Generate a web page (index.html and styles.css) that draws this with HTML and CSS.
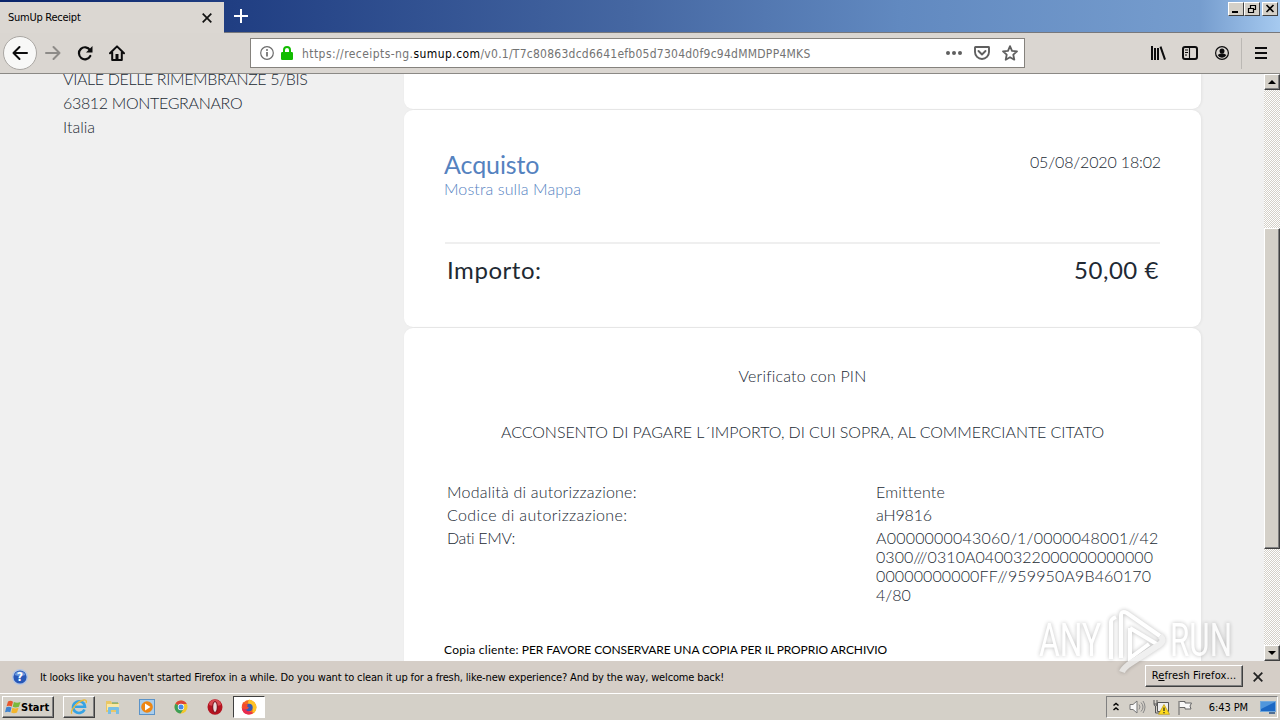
FILE: index.html
```html
<!DOCTYPE html>
<html lang="it">
<head>
  <meta charset="UTF-8">
  <title>SumUp Receipt</title>
  <link rel="stylesheet" href="styles.css">
</head>
<body>
  <div class="screen">

    <!-- Title bar -->
    <div class="titlebar">
      <div class="tab">
        <span class="tab-title">SumUp Receipt</span>
        <svg class="tab-close" width="10" height="10" viewBox="0 0 10 10"><path d="M.7.7l8.6 8.6M9.3.7L.7 9.3" stroke="#111" stroke-width="1.7"/></svg>
      </div>
      <svg class="new-tab" width="14" height="14" viewBox="0 0 14 14"><path d="M7 0v14M0 7h14" stroke="#fff" stroke-width="2"/></svg>
      <div class="window-buttons">
        <span class="win-btn"><svg width="14" height="12"><path d="M3 9h6" stroke="#000" stroke-width="2"/></svg></span>
        <span class="win-btn"><svg width="14" height="12"><path d="M5.500 5V2.500h5v4H8.500M5 2.500h6M3.500 5.500h5v4h-5zM3 5.500h6" fill="none" stroke="#000" stroke-width="1.200"/></svg></span>
        <span class="win-btn win-close"><svg width="14" height="12"><path d="M3.500 2l7 7M10.500 2l-7 7" stroke="#000" stroke-width="1.600"/></svg></span>
      </div>
    </div>

    <!-- Toolbar -->
    <div class="toolbar">
      <div class="nav">
        <span class="back"><svg width="18" height="16" viewBox="0 0 18 16"><path d="M8.500 2L2.500 8l6 6M2.500 8H16" fill="none" stroke="#0c0c0d" stroke-width="2" stroke-linecap="round" stroke-linejoin="round"/></svg></span>
        <svg class="forward" width="18" height="16" viewBox="0 0 18 16"><path d="M9.500 2l6 6-6 6M15.500 8H2" fill="none" stroke="#8d8b88" stroke-width="2" stroke-linecap="round" stroke-linejoin="round"/></svg>
        <svg class="reload" width="16" height="16" viewBox="0 0 16 16"><path d="M13 5A6 6 0 1 0 13.300 11" fill="none" stroke="#0c0c0d" stroke-width="2.200" stroke-linecap="round"/><path d="M15.500 1v6.500H9z" fill="#0c0c0d"/></svg>
        <svg class="home" width="16" height="16" viewBox="0 0 16 16"><path d="M1 8.300L8 1.400l7 6.900M3.200 7.500V15h9.600V7.500" fill="none" stroke="#0c0c0d" stroke-width="2" stroke-linecap="round" stroke-linejoin="round"/><path d="M6.500 9h3v6h-3z" fill="#0c0c0d"/></svg>
      </div>
      <div class="urlbar">
        <svg width="14" height="14" viewBox="0 0 14 14"><circle cx="7" cy="7" r="6.300" fill="none" stroke="#6c6c6c" stroke-width="1.200"/><path d="M7 6v4.500" stroke="#6c6c6c" stroke-width="1.700"/><circle cx="7" cy="3.900" r="1" fill="#6c6c6c"/></svg>
        <svg class="lock" width="12" height="14" viewBox="0 0 12 14"><path d="M3 7V4a3 3 0 0 1 6 0v3" fill="none" stroke="#12bc00" stroke-width="2"/><rect y="6" width="12" height="8" rx="1.200" fill="#12bc00"/></svg>
        <span class="url">https://receipts-ng.<b>sumup.com</b><span class="path">/v0.1/T7c80863dcd6641efb05d7304d0f9c94dMMDPP4MKS</span></span>
        <div class="url-actions">
          <svg width="16" height="4"><g fill="#5f5f5f"><circle cx="2" cy="2" r="2"/><circle cx="8" cy="2" r="2"/><circle cx="14" cy="2" r="2"/></g></svg>
          <svg width="16" height="14" viewBox="0 0 16 14"><path d="M1.500 1h13q.5 0 .5.500V6a7 7 0 0 1-14 0V1.500Q1 1 1.500 1zM4.500 5L8 8.500 11.500 5" fill="none" stroke="#5f5f5f" stroke-width="1.900" stroke-linecap="round" stroke-linejoin="round"/></svg>
          <svg width="16" height="16" viewBox="0 0 16 16"><path d="M8 1.200l2 4.600 5 .5-3.700 3.400 1 5L8 12.200l-4.300 2.500 1-5L1 6.300l5-.5z" fill="none" stroke="#5f5f5f" stroke-width="1.800" stroke-linejoin="round"/></svg>
        </div>
      </div>
      <div class="tools">
        <svg width="16" height="14" viewBox="0 0 16 14"><path d="M2 0v14M5 2v12M8 2v12M10.500.7l4.500 13" stroke="#0c0c0d" stroke-width="2"/></svg>
        <svg width="16" height="14" viewBox="0 0 16 14"><rect x="1" y="1" width="14" height="12" rx="2" fill="none" stroke="#0c0c0d" stroke-width="2"/><path d="M7.500 1v12M3 4h3M3 6.500h3M3 9h2" stroke="#0c0c0d" stroke-width="1.100"/></svg>
        <svg class="account" width="14" height="14" viewBox="0 0 14 14"><circle cx="7" cy="7" r="6.400" fill="none" stroke="#0c0c0d" stroke-width="1.200"/><circle cx="7" cy="5" r="2.500" fill="#0c0c0d"/><path d="M2.600 9Q7 5.700 11.400 9A5 5 0 0 1 2.600 9z" fill="#0c0c0d"/></svg>
        <span class="separator"></span>
        <svg width="12" height="12"><path d="M0 1h12M0 6h12M0 11h12" stroke="#0c0c0d" stroke-width="2"/></svg>
      </div>
    </div>

    <!-- Receipt page -->
    <div class="page">
      <div class="address">
        <div class="street">VIALE DELLE RIMEMBRANZE 5/BIS</div>
        <div class="city">63812 MONTEGRANARO</div>
        <div>Italia</div>
      </div>
      <div class="receipt">
        <div class="card card-top"></div>
        <div class="card purchase">
          <div class="purchase-head">
            <div>
              <div class="title">Acquisto</div>
              <div class="map">Mostra sulla Mappa</div>
            </div>
            <div class="date">05/08/2020 18:02</div>
          </div>
          <div class="amount">
            <span class="amount-label">Importo:</span>
            <span class="amount-value">50,00 €</span>
          </div>
        </div>
        <div class="card details">
          <div class="pin">Verificato con PIN</div>
          <div class="consent">ACCONSENTO DI PAGARE L´IMPORTO, DI CUI SOPRA, AL COMMERCIANTE CITATO</div>
          <div class="data">
            <span class="mode">Modalità di autorizzazione:</span><span class="issuer">Emittente</span>
            <span class="code">Codice di autorizzazione:</span><span class="code-value">aH9816</span>
            <span class="emv-label">Dati EMV:</span>
            <span class="emv"><span class="emv1">A0000000043060/1/0000048001//42</span><br><span class="emv2">0300///0310A0400322000000000000</span><br><span class="emv3">00000000000FF//959950A9B460170</span><br>4/80</span>
          </div>
          <div class="copy"><span class="copy-label">Copia cliente:</span> PER FAVORE CONSERVARE UNA COPIA PER IL PROPRIO ARCHIVIO</div>
        </div>
      </div>
      <div class="scrollbar">
        <span class="scroll-btn"><svg width="8" height="4"><path d="M0 4l4-4 4 4z"/></svg></span>
        <span class="thumb"></span>
        <span class="scroll-btn scroll-down"><svg width="8" height="4"><path d="M0 0l4 4 4-4z"/></svg></span>
      </div>
    </div>

    <!-- Notification -->
    <div class="notification">
      <svg width="16" height="16" viewBox="0 0 16 16"><circle cx="8" cy="8" r="7.300" fill="#2858b8" stroke="#b4c6e4" stroke-width="1.400"/><path d="M2.500 6a5.800 5 0 0 1 11 0Q8 8 2.500 6z" fill="#6c98dd"/><text x="8" y="12.300" class="question">?</text></svg>
      <span class="message">It looks like you haven't started Firefox in a while. Do you want to clean it up for a fresh, like-new experience? And by the way, welcome back!</span>
      <span class="refresh">R<u>e</u>fresh Firefox...</span>
      <svg class="dismiss" width="10" height="10" viewBox="0 0 10 10"><path d="M.7.7l8.600 8.600M9.300.7L.7 9.300" stroke="#222" stroke-width="1.800"/></svg>
    </div>

    <!-- Taskbar -->
    <div class="taskbar">
      <div class="start">
        <svg width="16" height="16" viewBox="0 0 16 16"><path d="M3 2.500Q5.500 1 8 2.700L6.800 7.500Q4 6 1.600 7.300z" fill="#e8572c"/><path d="M8.900 3Q12 4.500 15.500 3l-1.600 4.700Q10.500 9 7.700 7.800z" fill="#79b93c"/><path d="M1.300 8.300Q4 7 6.500 8.500l-1.200 4.800Q3 12 0 13.300z" fill="#3f83d0"/><path d="M7.400 8.800Q10.500 10 13.600 8.700L12 13.500Q9 15 6.200 13.600z" fill="#f3b52b"/></svg>
        <b>Start</b>
      </div>
      <div class="task raised">
        <svg width="18" height="18" viewBox="0 0 18 18"><path d="M14.500 11.500A6 5.800 0 1 1 15 8.800H5" fill="none" stroke="#36a3e4" stroke-width="2.600"/><path d="M2 15.800C-1 14 7 3 14 2c3-.3 2.500 2 2 3" fill="none" stroke="#e9b936" stroke-width="1.300"/></svg>
      </div>
      <div class="task">
        <svg width="16" height="16" viewBox="0 0 16 16"><path d="M1 2h5l1 2h7v9H1z" fill="#e9c765"/><path d="M2 5h12v6H2z" fill="#f9e8a5"/><path d="M3 15V9q0-1 1-1h9q1 0 1 1v6h-3v-4H6v4z" fill="#78bfe5"/><path d="M7 4h6" stroke="#5c9f59"/></svg>
      </div>
      <div class="task">
        <svg width="16" height="16" viewBox="0 0 16 16"><rect x=".5" y=".5" width="15" height="15" fill="#a9cdec" stroke="#5b93c8"/><circle cx="8" cy="8" r="5.800" fill="#ee8613"/><path d="M6 4.500L11.500 8 6 11.500z" fill="#fff"/></svg>
      </div>
      <div class="task">
        <svg width="14" height="14" viewBox="0 0 14 14"><circle cx="7" cy="7" r="6.500" fill="#f3c72c"/><path d="M7 7L1.400 3.700A6.500 6.500 0 0 1 12.800 4H7z" fill="#dc4437"/><path d="M1.400 3.700A6.500 6.500 0 0 0 6.500 13.500L9.500 9 7 7z" fill="#3c9e58"/><circle cx="7" cy="7" r="3.200" fill="#fff"/><circle cx="7" cy="7" r="2.500" fill="#4589e8"/></svg>
      </div>
      <div class="task">
        <svg width="16" height="16" viewBox="0 0 16 16"><ellipse cx="8" cy="8" rx="7.500" ry="7.800" fill="#b51320"/><path d="M2 6a6 5.500 0 0 1 12 0Q8 8 2 6z" fill="#d84a51"/><ellipse cx="8" cy="8" rx="2.300" ry="5.500" fill="#eadada" stroke="#760915"/></svg>
      </div>
      <div class="task pressed">
        <svg width="16" height="16" viewBox="0 0 16 16"><circle cx="8" cy="8.300" r="7.300" fill="#f56b20"/><path d="M8 .5c4 1 7.500 3.500 7.500 8 0 3-2 6-5 6.800 2-3 1.500-6.500-1.500-8.500C7 5.500 6.500 3 8 .5z" fill="#ffc326"/><path d="M1 9Q1 14 6 15.300q4 1 7-2Q8 14 5 10z" fill="#e92b50"/><circle cx="8" cy="8.500" r="3.700" fill="#3659b4"/><path d="M1 8l1-5 2 2 3 .5-1 2 2 1-2 2Q3 10 1 8z" fill="#f34a2e"/></svg>
      </div>
      <div class="tray">
        <svg width="8" height="10" viewBox="0 0 8 10"><path d="M1.500 3.500l2.500-2 2.500 2M1.500 8l2.500-2 2.500 2" fill="none" stroke="#000" stroke-width="1.500"/></svg>
        <svg class="sound" width="17" height="14" viewBox="0 0 17 14"><path d="M1 4.500h3L8 1v12L4 9.500H1z" fill="#f8f8f8" stroke="#777"/><path d="M10 4.500q2 2.500 0 5M12 2.500q4 4.500 0 9M14 1q4 6 0 12" fill="none" stroke="#888"/></svg>
        <svg class="network" width="17" height="16" viewBox="0 0 17 16"><path d="M4.500 3.500h11v9h-11z" fill="#eee" stroke="#555"/><path d="M1 1v4q0 2 1.500 2v7H6M4 1v4q0 2-1.500 2M1 5h3" fill="none" stroke="#555"/><path d="M11 5.500l5.500 9.800h-11z" fill="#ffdc1c" stroke="#b99713" stroke-width=".7"/><path d="M11 8.500v3.500M11 13v1.300" stroke="#222" stroke-width="1.200"/></svg>
        <svg class="flag" width="16" height="15" viewBox="0 0 16 15"><path d="M2 1v14M2.500 1.500H8v1.500h6.500L13 6l1 3H8V7.500H2.500" fill="#f8f8f8" stroke="#666"/></svg>
        <span class="clock">6:43 PM</span>
        <svg width="16" height="13" viewBox="0 0 16 13"><rect x=".5" y=".5" width="15" height="10" fill="#1c68c4" stroke="#72a8db"/><path d="M1 1h14L1 8z" fill="#5096dc"/><path d="M9 12h6" stroke="#244f83" stroke-width="1.500"/></svg>
      </div>
    </div>

    <svg class="watermark" width="208" height="74" viewBox="0 0 208 74">
      <text x="3" y="51" textLength="62" lengthAdjust="spacingAndGlyphs">ANY</text>
      <text x="134" y="51" textLength="62" lengthAdjust="spacingAndGlyphs">RUN</text>
      <path d="M75 54V17q0-3 5-5"/>
      <path d="M85 53V11q0-6 6-3l33 23M94 23v30l19-14M94 23l30 18"/>
      <path class="fold" d="M124 31q5 4 0 8L92 60q-5 4-6 7"/>
    </svg>
  </div>
</body>
</html>
```

FILE: styles.css
```css
body {
  margin: 0;
  font-family: "DejaVu Sans Condensed", "DejaVu Sans", sans-serif;
  font-stretch: condensed;
  font-size: 11px;
  color: #000;
}
svg {
  display: block;
  flex: none;
}
.screen {
  position: relative;
  display: flex;
  flex-direction: column;
  width: 1280px;
  height: 720px;
  overflow: hidden;
  white-space: nowrap;
}

/* Title bar */
.titlebar {
  display: flex;
  height: 33px;
  box-sizing: border-box;
  border-bottom: 1px solid #77787c;
  background: linear-gradient(90deg, #0a246a 0, #213f83 240px, #4567a2 630px, #6189c0 900px, #769dce 1200px, #a6caf0 1280px);
}
.tab {
  display: flex;
  align-items: center;
  justify-content: space-between;
  width: 224px;
  height: 31px;
  margin-top: 2px;
  padding: 0 12px 0 8px;
  box-sizing: border-box;
  background: #dbd7d2;
}
.tab-title {
  letter-spacing: -0.25px;
}
.new-tab {
  margin: 9px 0 0 10px;
}
.window-buttons {
  display: flex;
  margin: 2px 2px 0 auto;
}
.win-btn {
  width: 14px;
  height: 12px;
  border: 1px solid;
  border-color: #fff #404040 #404040 #fff;
  background: #d4d0c8;
}
.win-close {
  margin-left: 2px;
}

/* Toolbar */
.toolbar {
  display: flex;
  align-items: center;
  height: 41px;
  box-sizing: border-box;
  border-bottom: 1px solid #8b8985;
  background: #dad6d1;
}
.nav {
  display: flex;
  align-items: center;
  width: 250px;
}
.back {
  display: flex;
  align-items: center;
  justify-content: center;
  width: 32px;
  height: 32px;
  margin-left: 3px;
  border: 1px solid #aaa7a3;
  border-radius: 50%;
  background: #f8f8f7;
}
.forward {
  margin-left: 7px;
}
.reload {
  margin-left: 15px;
}
.home {
  margin-left: 16px;
}
.urlbar {
  display: flex;
  align-items: center;
  width: 775px;
  height: 30px;
  padding: 0 6px 0 9px;
  box-sizing: border-box;
  border: 1px solid #85827d;
  background: #fff;
}
.lock {
  margin: 0 9px 0 7px;
}
.url {
  padding-top: 1px;
  font-size: 12px;
  letter-spacing: 0.43px;
  color: #737373;
}
.url b {
  font-weight: normal;
  color: #000;
}
.path {
  letter-spacing: 0.25px;
}
.url-actions {
  display: flex;
  align-items: center;
  gap: 12px;
  margin-left: auto;
}
.tools {
  display: flex;
  align-items: center;
  gap: 16px;
  margin: 0 13px 0 auto;
}
.account {
  margin-left: 1px;
}
.separator {
  width: 1px;
  height: 31px;
  margin: 0 -3px 0 -4px;
  background: #bbb8b4;
}

/* Receipt page */
.page {
  display: flex;
  flex: none;
  height: 587px;
  overflow: hidden;
  background: #f0f0f0;
  font-family: Lato, sans-serif;
  font-size: 16px;
  font-weight: 300;
  font-stretch: normal;
  color: #212933;
}
.address {
  width: 341px;
  margin-top: -7px;
  padding-left: 63px;
  line-height: 24px;
}
.street {
  letter-spacing: -0.36px;
}
.city {
  letter-spacing: -0.33px;
}
.receipt {
  width: 797px;
}
.card {
  box-sizing: border-box;
  border-radius: 9px;
  background: #fff;
  box-shadow: 1px 0 3px rgba(0, 0, 0, 0.06);
}
.card-top {
  height: 35px;
  border-radius: 0 0 9px 9px;
}
.purchase {
  height: 217px;
  margin-top: 1px;
  padding: 40px 40px 0;
}
.purchase-head {
  display: flex;
  justify-content: space-between;
  height: 92px;
}
.title {
  font-size: 25px;
  font-weight: 400;
  line-height: 29px;
  letter-spacing: -0.1px;
  color: #5582bf;
}
.map {
  line-height: 19px;
  letter-spacing: 0.1px;
  color: #5582bf;
}
.date {
  line-height: 24px;
  letter-spacing: -0.15px;
}
.amount {
  display: flex;
  justify-content: space-between;
  margin: 0 1px;
  padding: 11px 1px 0 2px;
  border-top: 2px solid #efefef;
  font-size: 24px;
  font-weight: 400;
  line-height: 29px;
  letter-spacing: 0.55px;
}
.details {
  height: 400px;
  margin-top: 1px;
  padding: 38px 40px 0;
}
.pin,
.consent {
  text-align: center;
  line-height: 20px;
}
.pin {
  letter-spacing: 0.17px;
}
.consent {
  margin-top: 36px;
  letter-spacing: -0.06px;
}
.data {
  display: grid;
  grid-template-columns: 429px 285px;
  row-gap: 4px;
  margin: 40px 0 0 3px;
  line-height: 19px;
}
.mode {
  letter-spacing: 0.22px;
}
.code {
  letter-spacing: 0.36px;
}
.emv-label {
  letter-spacing: -0.33px;
}
.issuer,
.emv1 {
  letter-spacing: 0.2px;
}
.code-value {
  letter-spacing: -0.15px;
}
.emv2 {
  letter-spacing: 0.06px;
}
.emv3 {
  letter-spacing: 0.13px;
}
.copy {
  margin-top: 38px;
  font-size: 12px;
  font-weight: 400;
  line-height: 16px;
  letter-spacing: -0.09px;
  color: #000;
}
.copy-label {
  letter-spacing: 0.25px;
}
.scrollbar {
  display: flex;
  flex-direction: column;
  width: 16px;
  margin-left: auto;
  background: repeating-conic-gradient(#d4d0c8 0 25%, #fff 0 50%) 0 0 / 2px 2px;
}
.scroll-btn,
.thumb {
  display: flex;
  align-items: center;
  justify-content: center;
  height: 16px;
  box-sizing: border-box;
  border: 1px solid;
  border-color: #fff #404040 #404040 #fff;
  box-shadow: inset -1px -1px #808080;
  background: #d4d0c8;
}
.thumb {
  height: 321px;
  margin-top: 138px;
}
.scroll-down {
  margin-top: auto;
}

/* Notification */
.notification {
  display: flex;
  align-items: center;
  height: 32px;
  padding: 0 17px 0 12px;
  border-bottom: 1px solid #fff;
  background: #d5cec7;
}
.question {
  font-size: 12px;
  font-weight: bold;
  text-anchor: middle;
  fill: #fff;
}
.message {
  margin-left: 12px;
  letter-spacing: -0.145px;
}
.refresh {
  width: 98px;
  height: 22px;
  margin: -2px 10px 0 auto;
  box-sizing: border-box;
  border: 1px solid;
  border-color: #fff #404040 #404040 #fff;
  box-shadow: inset -1px -1px #808080;
  line-height: 19px;
  letter-spacing: 0.1px;
  text-align: center;
}

/* Taskbar */
.taskbar {
  display: flex;
  align-items: center;
  height: 26px;
  background: #d4d0c8;
}
.start {
  display: flex;
  align-items: center;
  width: 52px;
  height: 22px;
  margin-left: 2px;
  padding-left: 2px;
  box-sizing: border-box;
  border: 1px solid;
  border-color: #fff #404040 #404040 #fff;
  box-shadow: inset -1px -1px #808080;
}
.task {
  display: flex;
  align-items: center;
  justify-content: center;
  width: 32px;
  height: 22px;
  margin-left: 2px;
  box-sizing: border-box;
}
.raised {
  margin-left: 9px;
  border: 1px solid;
  border-color: #fff #404040 #404040 #fff;
  box-shadow: inset -1px -1px #808080;
}
.pressed {
  border: 1px solid;
  border-color: #404040 #fff #fff #404040;
  background: #fff;
}
.tray {
  display: flex;
  align-items: center;
  width: 172px;
  height: 22px;
  margin: 0 2px 0 auto;
  padding: 0 1px 0 5px;
  box-sizing: border-box;
  border: 1px solid;
  border-color: #808080 #fff #fff #808080;
}
.sound {
  margin-left: 9px;
}
.network {
  margin-left: 7px;
}
.flag {
  margin-left: 7px;
}
.clock {
  margin: 0 12px 0 auto;
  letter-spacing: -0.1px;
}

/* Watermark over page and notification */
.watermark {
  position: absolute;
  left: 1036px;
  top: 605px;
  overflow: visible;
  opacity: 0.75;
  filter: drop-shadow(0 0 2px rgba(0, 0, 0, 0.35));
}
.watermark text {
  font: 400 46px Roboto, sans-serif;
  fill: #fff;
}
.watermark path {
  fill: none;
  stroke: #fff;
  stroke-width: 4;
}
.watermark .fold {
  stroke: #ececec;
  stroke-width: 6;
}
```
